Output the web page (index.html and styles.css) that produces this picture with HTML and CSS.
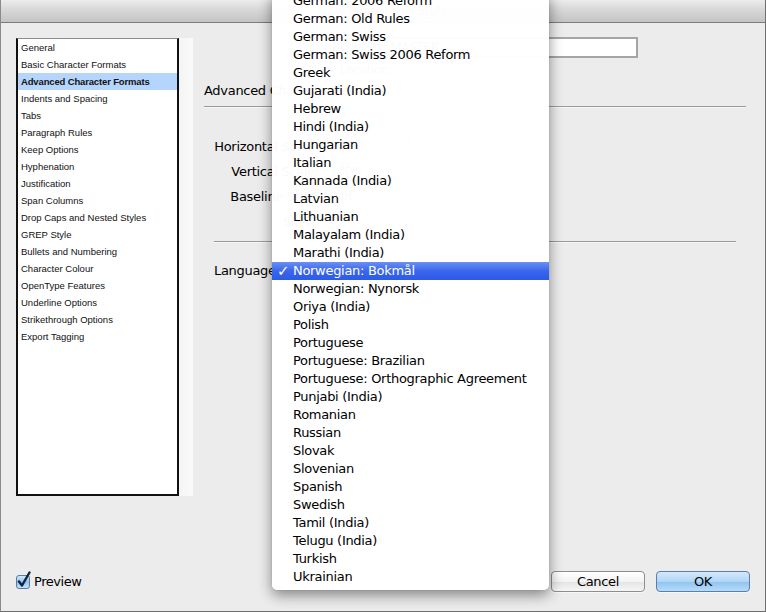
FILE: index.html
```html
<!DOCTYPE html>
<html>
<head>
<meta charset="utf-8">
<link rel="stylesheet" href="styles.css">
</head>
<body>
<div class="window">
  <div class="titlebar">New Paragraph Style</div>
  <div class="main">
    <div class="sidebar">
      <ul class="list">
        <li>General</li>
        <li>Basic Character Formats</li>
        <li class="sel">Advanced Character Formats</li>
        <li>Indents and Spacing</li>
        <li>Tabs</li>
        <li>Paragraph Rules</li>
        <li>Keep Options</li>
        <li>Hyphenation</li>
        <li>Justification</li>
        <li>Span Columns</li>
        <li>Drop Caps and Nested Styles</li>
        <li>GREP Style</li>
        <li>Bullets and Numbering</li>
        <li>Character Colour</li>
        <li>OpenType Features</li>
        <li>Underline Options</li>
        <li>Strikethrough Options</li>
        <li>Export Tagging</li>
      </ul>
      <div class="strip"></div>
    </div>
    <div class="panel">
      <div class="name-row"><div class="field wide">Body Text MASTER</div></div>
      <div class="location">Location:</div>
      <div class="heading">Advanced Character Formats</div>
      <div class="rule"></div>
      <div class="grid">
        <div class="lbl">Horizontal Scale:</div><div class="field">100%</div>
        <div class="lbl">Vertical Scale:</div><div class="field">100%</div>
        <div class="lbl">Baseline Shift:</div><div class="field">0 pt</div>
        <div class="lbl">Skew:</div><div class="field">0°</div>
      </div>
      <div class="rule short"></div>
      <div class="lang-row">Language:</div>
    </div>
  </div>
  <div class="footer">
    <label class="preview">
      <svg class="cb" width="16" height="19" viewBox="0 0 16 19">
        <defs>
          <linearGradient id="cbg" x1="0" y1="0" x2="0" y2="1">
            <stop offset="0" stop-color="#d6ecfc"/>
            <stop offset="0.5" stop-color="#8ec5f2"/>
            <stop offset="1" stop-color="#c6e6fd"/>
          </linearGradient>
        </defs>
        <rect x="0.5" y="4.5" width="13" height="13" rx="2.5" fill="url(#cbg)" stroke="#5b7b9e"/>
        <path d="M3 10.5 L6 14.5 L13.5 1.5" fill="none" stroke="#13243d" stroke-width="2.4" stroke-linecap="round" stroke-linejoin="round"/>
      </svg>
      <span>Preview</span>
    </label>
    <div class="buttons">
      <div class="btn">Cancel</div>
      <div class="btn ok">OK</div>
    </div>
  </div>
  <ul class="menu">
    <li>German: 2006 Reform</li>
    <li>German: Old Rules</li>
    <li>German: Swiss</li>
    <li>German: Swiss 2006 Reform</li>
    <li>Greek</li>
    <li>Gujarati (India)</li>
    <li>Hebrew</li>
    <li>Hindi (India)</li>
    <li>Hungarian</li>
    <li>Italian</li>
    <li>Kannada (India)</li>
    <li>Latvian</li>
    <li>Lithuanian</li>
    <li>Malayalam (India)</li>
    <li>Marathi (India)</li>
    <li class="hi"><span class="check">✓</span>Norwegian: Bokmål</li>
    <li>Norwegian: Nynorsk</li>
    <li>Oriya (India)</li>
    <li>Polish</li>
    <li>Portuguese</li>
    <li>Portuguese: Brazilian</li>
    <li>Portuguese: Orthographic Agreement</li>
    <li>Punjabi (India)</li>
    <li>Romanian</li>
    <li>Russian</li>
    <li>Slovak</li>
    <li>Slovenian</li>
    <li>Spanish</li>
    <li>Swedish</li>
    <li>Tamil (India)</li>
    <li>Telugu (India)</li>
    <li>Turkish</li>
    <li>Ukrainian</li>
  </ul>
</div>
</body>
</html>
```
FILE: styles.css
```css
* { box-sizing: border-box; }
html, body { margin: 0; padding: 0; }
body {
  width: 766px;
  height: 612px;
  overflow: hidden;
  background: #ececec;
  font-family: "DejaVu Sans", sans-serif;
  color: #000;
}
.window {
  position: relative;
  width: 766px;
  height: 612px;
  background: #ececec;
  border-left: 1px solid #8a8a8a;
  border-right: 1px solid #6e6e6e;
  border-bottom: 1px solid #6e6e6e;
  display: flex;
  flex-direction: column;
  overflow: hidden;
}
.titlebar {
  height: 23px;
  flex: none;
  background: linear-gradient(#ececec, #d9d9d9 40%, #c4c4c4);
  border-bottom: 1px solid #7b7b7b;
  text-align: center;
  font-size: 13px;
  line-height: 22px;
  color: #4a4a4a;
  letter-spacing: -0.3px;
}
.main {
  flex: 1;
  display: flex;
  align-items: flex-start;
}
.sidebar {
  margin: 15px 0 0 15px;
  display: flex;
  height: 458px;
  flex: none;
}
.list {
  list-style: none;
  margin: 0;
  padding: 0;
  width: 163px;
  background: #fff;
  border-top: 1px solid #8c8c8c;
  border-left: 2px solid #111;
  border-right: 2px solid #111;
  border-bottom: 2px solid #111;
}
.list li {
  height: 17px;
  line-height: 17px;
  padding-left: 3px;
  font-family: "Liberation Sans", sans-serif;
  font-size: 9.5px;
  color: #111;
  white-space: nowrap;
}
.list li.sel { background: #b5d5fd; font-weight: bold; letter-spacing: -0.15px; }
.strip {
  width: 14px;
  background: linear-gradient(90deg, #f4f4f4, #fafafa);
}
.panel {
  flex: 1;
  display: flex;
  flex-direction: column;
  font-size: 13px;
  letter-spacing: -0.3px;
}
.name-row {
  margin: 14px 0 0 97px;
  height: 21px;
}
.field {
  height: 19px;
  background: #fff;
  border: 1px solid #9c9c9c;
  font-size: 12px;
  line-height: 17px;
  padding-left: 4px;
  color: #222;
}
.field.wide { width: 348px; height: 21px; border-width: 2px; border-color: #a5a5a5; line-height: 17px; padding-left: 40px; }
.location {
  margin: 6px 0 0 147px;
  height: 13px;
  line-height: 13px;
  font-size: 12px;
  color: #333;
}
.heading {
  margin: 7px 0 0 11px;
  line-height: 14px;
  height: 14px;
}
.rule {
  margin: 8px 19px 0 11px;
  height: 2px;
  border-top: 1px solid #9a9a9a;
  border-bottom: 1px solid #f7f7f7;
}
.rule.short { margin: 10px 29px 0 21px; }
.grid {
  margin: 29px 0 0 21px;
  display: grid;
  grid-template-columns: 105px 86px;
  column-gap: 6px;
  row-gap: 6px;
  align-items: center;
}
.grid .lbl {
  text-align: right;
  line-height: 19px;
  white-space: nowrap;
}
.lang-row {
  margin: 18px 0 0 21px;
  line-height: 20px;
}
.footer {
  flex: none;
  height: 40px;
  display: flex;
  align-items: flex-start;
  justify-content: space-between;
  padding: 0 15px 0 15px;
}
.preview {
  display: flex;
  align-items: flex-end;
  gap: 2px;
  font-size: 13px;
  letter-spacing: -0.45px;
  margin-top: 0;
}
.preview span { line-height: 16px; margin-bottom: 0; }
.cb { display: block; }
.buttons {
  display: flex;
  gap: 11px;
  margin-top: 0;
}
.btn {
  width: 94px;
  height: 21px;
  border: 1px solid #8e8e8e;
  border-radius: 4px;
  background: linear-gradient(#ffffff, #f3f3f3 50%, #e4e4e4 51%, #f6f6f6);
  text-align: center;
  font-size: 13px;
  line-height: 19px;
  letter-spacing: -0.3px;
  box-shadow: 0 1px 0 rgba(255,255,255,0.6);
}
.btn.ok {
  border-color: #5d7ea6;
  background: linear-gradient(#d5e9fb, #b0d5f6 50%, #8ec3f0 51%, #b7dcf9);
}
.menu {
  position: absolute;
  left: 271px;
  top: -8px;
  width: 277px;
  margin: 0;
  padding: 0 0 4px 0;
  list-style: none;
  background: rgba(255,255,255,0.975);
  border-radius: 0 0 5px 5px;
  box-shadow: 0 5px 14px rgba(0,0,0,0.45), 0 0 1px rgba(0,0,0,0.3);
  font-size: 13px;
  letter-spacing: -0.3px;
}
.menu li {
  position: relative;
  height: 18px;
  line-height: 18px;
  padding-left: 21px;
  white-space: nowrap;
}
.menu li.hi {
  background: linear-gradient(#6a8ff4, #3a66ec 50%, #2c5ae8);
  color: #fff;
}
.check {
  position: absolute;
  left: 5px;
  top: 0;
  font-size: 15px;
  font-weight: bold;
}
```
